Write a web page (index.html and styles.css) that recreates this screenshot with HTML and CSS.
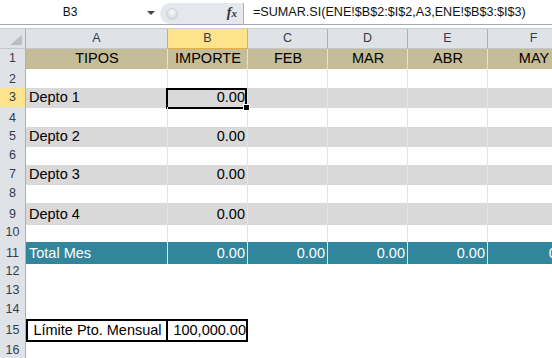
FILE: index.html
```html
<!DOCTYPE html>
<html>
<head>
    <meta charset="utf-8" />
    <title>Presupuesto</title>
    <link rel="stylesheet" href="styles.css">
</head>
<body>
    <section class="formula-bar">
        <div class="name-box">
            <span class="cell-name">B3</span>
            <span class="drop"></span>
        </div>
        <div class="groove">
            <span class="knob"></span>
            <span class="fx"><i>f</i><i class="x">x</i></span>
        </div>
        <div class="formula">=SUMAR.SI(ENE!$B$2:$I$2,A3,ENE!$B$3:$I$3)</div>
    </section>
    <div class="bar-gap"></div>

    <section class="sheet">
        <div class="row head">
            <div class="corner"><span class="tri"></span></div>
            <div class="col-h">A</div>
            <div class="col-h sel">B</div>
            <div class="col-h">C</div>
            <div class="col-h">D</div>
            <div class="col-h">E</div>
            <div class="col-h">F</div>
        </div>

        <div class="row tan">
            <div class="rn">1</div>
            <div class="c mid">TIPOS</div>
            <div class="c mid">IMPORTE</div>
            <div class="c mid">FEB</div>
            <div class="c mid">MAR</div>
            <div class="c mid">ABR</div>
            <div class="c mid">MAY</div>
        </div>
        <div class="row h20 plain">
            <div class="rn">2</div>
            <div class="c"></div><div class="c"></div><div class="c"></div><div class="c"></div><div class="c"></div><div class="c"></div>
        </div>
        <div class="row gray">
            <div class="rn sel">3</div>
            <div class="c">Depto 1</div>
            <div class="c num active">0.00<span class="handle"></span></div>
            <div class="c"></div><div class="c"></div><div class="c"></div><div class="c"></div>
        </div>
        <div class="row h20 plain">
            <div class="rn">4</div>
            <div class="c"></div><div class="c"></div><div class="c"></div><div class="c"></div><div class="c"></div><div class="c"></div>
        </div>
        <div class="row gray">
            <div class="rn">5</div>
            <div class="c">Depto 2</div>
            <div class="c num">0.00</div>
            <div class="c"></div><div class="c"></div><div class="c"></div><div class="c"></div>
        </div>
        <div class="row plain">
            <div class="rn">6</div>
            <div class="c"></div><div class="c"></div><div class="c"></div><div class="c"></div><div class="c"></div><div class="c"></div>
        </div>
        <div class="row gray">
            <div class="rn">7</div>
            <div class="c">Depto 3</div>
            <div class="c num">0.00</div>
            <div class="c"></div><div class="c"></div><div class="c"></div><div class="c"></div>
        </div>
        <div class="row plain">
            <div class="rn">8</div>
            <div class="c"></div><div class="c"></div><div class="c"></div><div class="c"></div><div class="c"></div><div class="c"></div>
        </div>
        <div class="row h20 gray">
            <div class="rn">9</div>
            <div class="c">Depto 4</div>
            <div class="c num">0.00</div>
            <div class="c"></div><div class="c"></div><div class="c"></div><div class="c"></div>
        </div>
        <div class="row plain">
            <div class="rn">10</div>
            <div class="c"></div><div class="c"></div><div class="c"></div><div class="c"></div><div class="c"></div><div class="c"></div>
        </div>
        <div class="row h20 teal">
            <div class="rn">11</div>
            <div class="c">Total Mes</div>
            <div class="c num">0.00</div>
            <div class="c num">0.00</div>
            <div class="c num">0.00</div>
            <div class="c num">0.00</div>
            <div class="c num">0.00</div>
        </div>
        <div class="row">
            <div class="rn">12</div>
        </div>
        <div class="row">
            <div class="rn">13</div>
        </div>
        <div class="row">
            <div class="rn">14</div>
        </div>
        <div class="row h20">
            <div class="rn">15</div>
            <div class="c mid boxed box-a">Límite Pto. Mensual</div>
            <div class="c num boxed box-b">100,000.00</div>
        </div>
        <div class="row h20">
            <div class="rn">16</div>
        </div>
    </section>
</body>
</html>
```

FILE: styles.css
```css
body {
    margin: 0;
    background: #fff;
    font-family: "Liberation Sans", Arial, sans-serif;
    overflow: hidden;
}

/* formula bar */
.formula-bar {
    display: flex;
    height: 24px;
    border-bottom: 1px solid #a4a9b1;
    background: #fff;
}

.name-box {
    width: 160px;
    display: flex;
    align-items: center;
    font-size: 12px;
    color: #111;
}

    .name-box .cell-name {
        width: 140px;
        text-align: center;
    }

    .name-box .drop {
        width: 0;
        height: 0;
        margin-left: 7px;
        margin-top: 2px;
        border-left: 4px solid transparent;
        border-right: 4px solid transparent;
        border-top: 4px solid #454545;
    }

.groove {
    width: 84px;
    height: 21px;
    margin-top: 3px;
    box-sizing: border-box;
    background: #e4e7eb;
    border-radius: 11px 0 0 11px;
    border-right: 1px solid #a9afb8;
    display: flex;
    align-items: center;
    justify-content: space-between;
    padding: 0 6px 0 6px;
}

.knob {
    width: 10px;
    height: 10px;
    border-radius: 50%;
    background: radial-gradient(circle at 50% 35%, #fbfbfc, #c7cbd1);
    border: 1px solid #cfd3d8;
}

.fx {
    font-family: "Liberation Serif", serif;
    font-weight: bold;
    font-size: 14px;
    color: #333;
    margin-top: -2px;
}

    .fx .x {
        font-size: 11px;
    }

.formula {
    flex: 1;
    padding-left: 9px;
    line-height: 25px;
    font-size: 12.6px;
    color: #111;
    white-space: nowrap;
}

.bar-gap {
    height: 2px;
    padding-top: 1px;
    background: #fff;
    border-bottom: 1px solid #c8ccd2;
}

/* sheet grid */
.sheet {
    background: #fff;
    overflow: hidden;
    width: 552px;
}

.row {
    display: grid;
    grid-template-columns: 26px 142px 80px 80px 80px 80px 92px;
    height: 19px;
    font-size: 14.5px;
    line-height: 19px;
}

    .row.h20 {
        height: 20px;
        line-height: 20px;
    }

        .row.h20 > div {
            padding-top: 1px;
            box-sizing: border-box;
        }

    .row.head {
        height: 20px;
        line-height: 19px;
        background: #dfe3e8;
    }

.corner {
    position: relative;
    border-right: 1px solid #aab1bb;
    border-bottom: 1px solid #c3c8cf;
}

    .corner .tri {
        position: absolute;
        right: 3px;
        bottom: 3px;
        width: 0;
        height: 0;
        border-left: 12px solid transparent;
        border-bottom: 10px solid #b9bec6;
    }

.col-h {
    font-size: 12.5px;
    color: #333c4a;
    text-align: center;
    border-right: 1px solid #aab1bb;
    border-bottom: 1px solid #c3c8cf;
}

    .col-h.sel {
        background: #fde38b;
        border-right-color: #e9ad46;
        border-bottom-color: #e9ad46;
    }

.rn {
    font-size: 12.5px;
    color: #333c4a;
    text-align: center;
    background: #dfe3e8;
    border-right: 1px solid #aab1bb;
    border-bottom: 1px solid #b8bec7;
    box-sizing: border-box;
}

    .rn.sel {
        background: #fde38b;
        border-right-color: #e9ad46;
        border-bottom-color: #e9ad46;
    }

.c {
    position: relative;
    padding: 0 2px 0 3px;
    white-space: nowrap;
    overflow: visible;
    color: #000;
}

.tan .c,
.plain .c,
.gray .c,
.teal .c {
    border-right: 1px solid #e3e2ea;
}

.tan .c {
    background: #c4bd97;
}

.gray .c {
    background: #d9d9d9;
}

.teal .c {
    background: #31869b;
    color: #fff;
}

.mid {
    text-align: center;
}

.num {
    text-align: right;
}

/* active cell B3 */
.active::after {
    content: "";
    position: absolute;
    left: -2px;
    right: 0;
    top: 0;
    bottom: -1px;
    border: 2px solid #000;
}

.handle {
    position: absolute;
    right: -3px;
    bottom: -3px;
    width: 5px;
    height: 5px;
    background: #000;
    border: 1px solid #fff;
    z-index: 2;
}

/* limit box, row 15 */
.boxed::after {
    content: "";
    position: absolute;
    top: 0;
    bottom: -1px;
    border: 2px solid #000;
}

.box-a::after {
    left: 0;
    right: 0;
}

.box-b::after {
    left: -2px;
    right: 0;
}
```
